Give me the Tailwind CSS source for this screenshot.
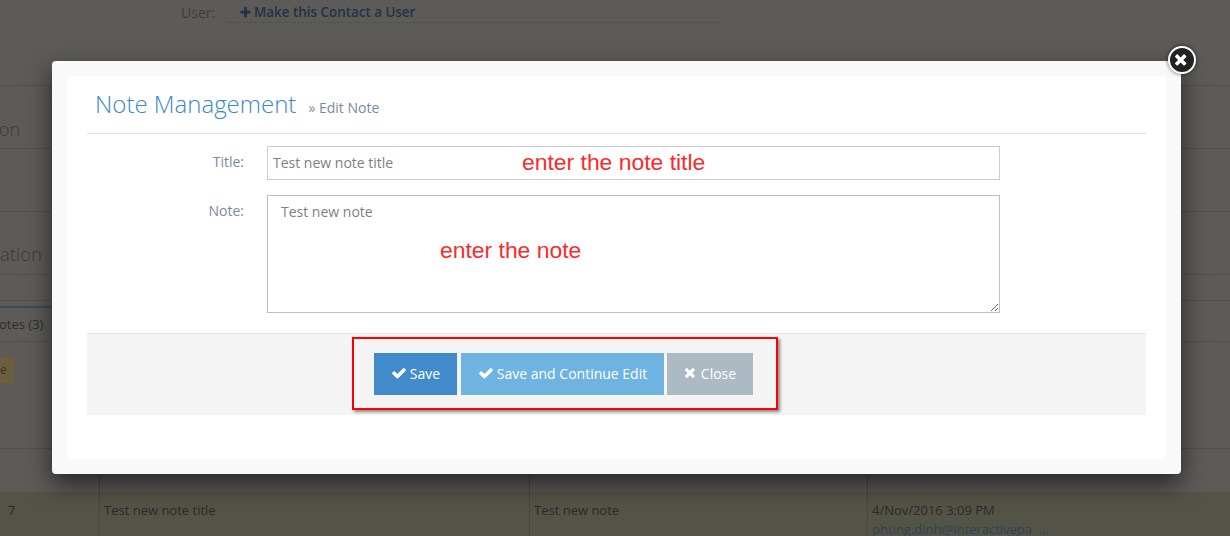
<!DOCTYPE html>
<html lang="en">
<head>
    <meta charset="UTF-8">
    <title>Note Management</title>
    <script src="https://cdn.jsdelivr.net/npm/@tailwindcss/browser@4"></script>
</head>
<body class="bg-[#5c5b58] font-['Open_Sans',sans-serif] overflow-hidden">

<div class="relative w-[1230px] h-[536px] overflow-hidden">

    <!-- Page behind the dialog -->
    <div class="flex flex-col text-[13px] text-[#2e2d2e]">
        <div class="h-[86px] border-b border-[#504f4e] flex items-start pl-[181px]">
            <span class="w-[46px] mt-[3px] text-[14px] leading-[19px] text-[#3e3e40]">User:</span>
            <div class="w-[493px] h-[23px] border-b border-dotted border-[#4a4a4a] pl-[12px] pt-[3px] flex items-center gap-[2px] text-[13.4px] leading-[19px] font-semibold text-[#1f3347]">
                <svg class="w-[13px] h-[13px] fill-[#1f3347]" viewBox="0 0 1792 1792"><path d="M1600 736v192q0 40-28 68t-68 28h-416v416q0 40-28 68t-68 28h-192q-40 0-68-28t-28-68v-416h-416q-40 0-68-28t-28-68v-192q0-40 28-68t68-28h416v-416q0-40 28-68t68-28h192q40 0 68 28t28 68v416h416q40 0 68 28t28 68z"/></svg>
                <span>Make this Contact a User</span>
            </div>
        </div>
        <div class="h-[63px] border-b border-[#504f4e] flex items-center text-[18px] font-light text-[#3a393a]">
            <span class="-ml-[1px] pt-[25px]">on</span>
        </div>
        <div class="h-[63px] border-b border-[#504f4e]"></div>
        <div class="h-[63px] border-b border-[#504f4e] flex items-center text-[18.5px] font-light text-[#3a393a]">
            <span class="pt-[22px]">ation</span>
        </div>
        <div class="h-[26px] border-b border-[#504f4e]"></div>
        <div class="h-[7px]">
            <div class="w-[60px] h-[7px] border-b-2 border-[#3b4a5a]"></div>
        </div>
        <div class="h-[34px] border-b border-[#504f4e] flex items-center text-[13px] text-[#2e2d2e]">
            <span class="-ml-[1px] pt-[1px]">otes (3)</span>
        </div>
        <div class="h-[107px] border-b border-[#504f4e] pt-[15px]">
            <div class="w-[14px] h-[26px] bg-[#6d5e3e] flex items-center text-[12px] text-[#3c3226]">e</div>
        </div>
        <div class="h-[43px] grid grid-cols-[100px_430px_338px_1fr]">
            <div class="border-r border-[#4a4a49]"></div>
            <div class="border-r border-[#4a4a49]"></div>
            <div class="border-r border-[#4a4a49]"></div>
            <div class="pl-[4px] pt-[7px] text-[13px] leading-[19px] text-[#1f3347]">phung.dinh@interactivepa</div>
        </div>
        <div class="h-[45px] bg-[#535347] grid grid-cols-[100px_430px_338px_1fr] text-[13px] leading-[19px] text-[#2c2a2b]">
            <div class="border-r border-[#484840] pl-[8px] pt-[9px]">7</div>
            <div class="border-r border-[#484840] pl-[4px] pt-[9px]">Test new note title</div>
            <div class="border-r border-[#484840] pl-[4px] pt-[9px]">Test new note</div>
            <div class="pl-[4px] pt-[9px]">
                <div>4/Nov/2016 3:09 PM</div>
                <div class="text-[#2f4356]">phung.dinh@interactivepa&nbsp; ...</div>
            </div>
        </div>
    </div>

    <!-- Dialog -->
    <div class="absolute left-[52px] top-[61px] w-[1129px] h-[413px] bg-[#f9f9f9] rounded-[4px] p-[15px] shadow-[0_10px_25px_rgba(0,0,0,0.6)]">
        <div class="h-full bg-white px-[20px] pb-[44px] flex flex-col">
            <div class="h-[58px] border-b border-[#e2e2e2] pl-[8px] pt-[11px] flex items-baseline gap-[12px]">
                <span class="text-[24px] leading-[33px] font-light text-[#3b87c8]">Note Management</span>
                <span class="text-[14px] text-[#7b8a9c]">» Edit Note</span>
            </div>

            <div class="flex-1 flex flex-col">
                <div class="flex mt-[12px]">
                    <label class="w-[157px] text-right text-[14px] leading-[19px] pt-[6px] text-[#7b8a9c]">Title:</label>
                    <input type="text" value="Test new note title" class="ml-[23px] w-[733px] h-[34px] border border-[#cccccc] px-[5px] pb-[2px] text-[14px] text-[#7f7f7f] bg-white">
                </div>
                <div class="flex mt-[15px]">
                    <label class="w-[157px] text-right text-[14px] leading-[19px] pt-[6px] text-[#7b8a9c]">Note:</label>
                    <textarea class="ml-[23px] w-[733px] h-[118px] border border-[#bdbdbd] px-[13px] pt-[6px] pb-[8px] text-[14px] leading-[19px] text-[#7f7f7f] bg-white resize-y">Test new note</textarea>
                </div>
            </div>

            <div class="h-[82px] bg-[#f4f4f4] border-t border-[#e5e5e5] pl-[287px] pt-[19px] flex items-start text-[14px] text-white">
                <button class="h-[42px] w-[83px] pb-[2px] bg-[#428bca] flex items-center justify-center gap-[3px]">
                    <svg class="w-[16px] h-[16px] fill-white" viewBox="0 0 1792 1792"><path d="M1671 566q0 40-28 68l-724 724-136 136q-28 28-68 28t-68-28l-136-136-362-362q-28-28-28-68t28-68l136-136q28-28 68-28t68 28l294 295 656-657q28-28 68-28t68 28l136 136q28 28 28 68z"/></svg>
                    Save
                </button>
                <button class="ml-[4px] h-[42px] w-[203px] pb-[2px] bg-[#6fb3e0] flex items-center justify-center gap-[3px]">
                    <svg class="w-[16px] h-[16px] fill-white" viewBox="0 0 1792 1792"><path d="M1671 566q0 40-28 68l-724 724-136 136q-28 28-68 28t-68-28l-136-136-362-362q-28-28-28-68t28-68l136-136q28-28 68-28t68 28l294 295 656-657q28-28 68-28t68 28l136 136q28 28 28 68z"/></svg>
                    Save and Continue Edit
                </button>
                <button class="ml-[3px] h-[42px] w-[86px] pb-[2px] bg-[#abbac3] flex items-center justify-center gap-[2px]">
                    <svg class="w-[15px] h-[15px] fill-white" viewBox="0 0 1792 1792"><path d="M1298 1202q0 40-28 68l-136 136q-28 28-68 28t-68-28l-294-294-294 294q-28 28-68 28t-68-28l-136-136q-28-28-28-68t28-68l294-294-294-294q-28-28-28-68t28-68l136-136q28-28 68-28t68 28l294 294 294-294q28-28 68-28t68 28l136 136q28 28 28 68t-28 68l-294 294 294 294q28 28 28 68z"/></svg>
                    Close
                </button>
            </div>
        </div>
    </div>

    <!-- Close button on the dialog corner -->
    <div class="absolute left-[1168px] top-[46px] w-[28px] h-[28px] rounded-full bg-[#222222] border-2 border-white flex items-center justify-center shadow-[0_0_4px_rgba(0,0,0,0.6)]">
        <svg class="w-[17px] h-[17px] fill-white" viewBox="0 0 1792 1792"><path d="M1298 1202q0 40-28 68l-136 136q-28 28-68 28t-68-28l-294-294-294 294q-28 28-68 28t-68-28l-136-136q-28-28-28-68t28-68l294-294-294-294q-28-28-28-68t28-68l136-136q28-28 68-28t68 28l294 294 294-294q28-28 68-28t68 28l136 136q28 28 28 68t-28 68l-294 294 294 294q28 28 28 68z"/></svg>
    </div>

    <!-- Screenshot annotations -->
    <span class="absolute left-[522px] top-[149px] font-['Liberation_Sans',sans-serif] text-[22.9px] leading-[27px] text-[#fb2a2a]">enter the note title</span>
    <span class="absolute left-[440px] top-[237px] font-['Liberation_Sans',sans-serif] text-[22.9px] leading-[27px] text-[#fb2a2a]">enter the note</span>
    <div class="absolute left-[352px] top-[337px] w-[426px] h-[73px] border-2 border-[#ff0000] shadow-[2px_2px_3px_rgba(0,0,0,0.45)]"></div>
</div>

</body>
</html>
